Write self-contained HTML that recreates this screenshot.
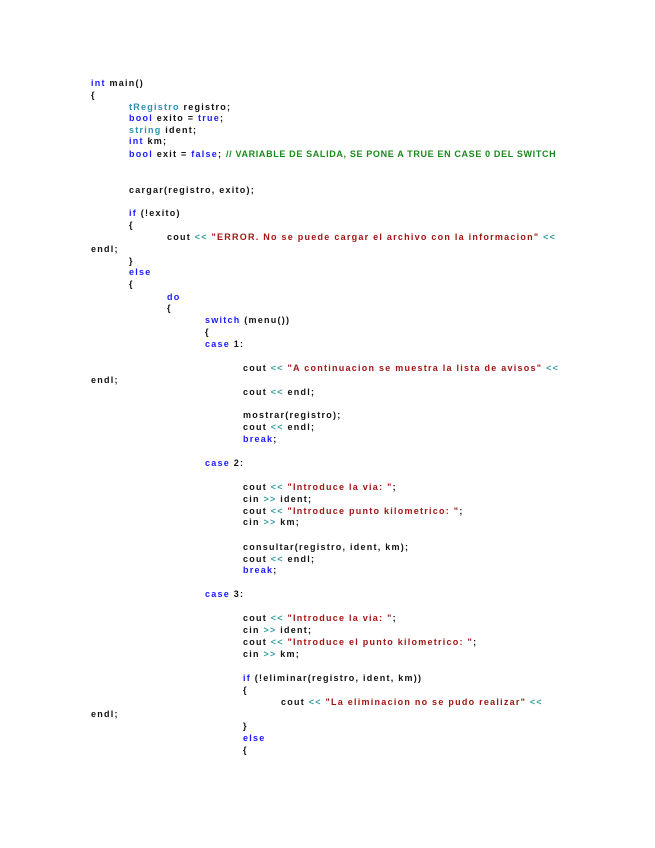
<!DOCTYPE html>
<html><head><meta charset="utf-8"><style>
body{margin:0;width:655px;height:848px;background:#fff;position:relative;overflow:hidden}
.l{position:absolute;white-space:pre;font-family:"Liberation Sans",sans-serif;font-weight:bold;font-size:9px;letter-spacing:1.25px;color:#111;line-height:12px}
.k{color:#1a1aff}.t{color:#2b91af}.s{color:#a31515}.c{color:#1a8a1a;letter-spacing:0.65px}.o{color:#3aa0a0}
</style></head><body>
<div class="l" style="top:77px;left:91px"><span class="k">int</span> main()</div>
<div class="l" style="top:89px;left:91px">{</div>
<div class="l" style="top:101px;left:129px"><span class="t">tRegistro</span> registro;</div>
<div class="l" style="top:112px;left:129px"><span class="k">bool</span> exito = <span class="k">true</span>;</div>
<div class="l" style="top:124px;left:129px"><span class="t">string</span> ident;</div>
<div class="l" style="top:135px;left:129px"><span class="k">int</span> km;</div>
<div class="l" style="top:148px;left:129px"><span class="k">bool</span> exit = <span class="k">false</span>; <span class="c">// VARIABLE DE SALIDA, SE PONE A TRUE EN CASE 0 DEL SWITCH</span></div>
<div class="l" style="top:184px;left:129px">cargar(registro, exito);</div>
<div class="l" style="top:207px;left:129px"><span class="k">if</span> (!exito)</div>
<div class="l" style="top:219px;left:129px">{</div>
<div class="l" style="top:231px;left:167px">cout <span class="o">&lt;&lt;</span> <span class="s">"ERROR. No se puede cargar el archivo con la informacion"</span> <span class="o">&lt;&lt;</span></div>
<div class="l" style="top:243px;left:91px">endl;</div>
<div class="l" style="top:255px;left:129px">}</div>
<div class="l" style="top:266px;left:129px"><span class="k">else</span></div>
<div class="l" style="top:278px;left:129px">{</div>
<div class="l" style="top:291px;left:167px"><span class="k">do</span></div>
<div class="l" style="top:302px;left:167px">{</div>
<div class="l" style="top:314px;left:205px"><span class="k">switch</span> (menu())</div>
<div class="l" style="top:326px;left:205px">{</div>
<div class="l" style="top:338px;left:205px"><span class="k">case</span> 1:</div>
<div class="l" style="top:362px;left:243px">cout <span class="o">&lt;&lt;</span> <span class="s">"A continuacion se muestra la lista de avisos"</span> <span class="o">&lt;&lt;</span></div>
<div class="l" style="top:374px;left:91px">endl;</div>
<div class="l" style="top:386px;left:243px">cout <span class="o">&lt;&lt;</span> endl;</div>
<div class="l" style="top:409px;left:243px">mostrar(registro);</div>
<div class="l" style="top:421px;left:243px">cout <span class="o">&lt;&lt;</span> endl;</div>
<div class="l" style="top:433px;left:243px"><span class="k">break</span>;</div>
<div class="l" style="top:457px;left:205px"><span class="k">case</span> 2:</div>
<div class="l" style="top:481px;left:243px">cout <span class="o">&lt;&lt;</span> <span class="s">"Introduce la via: "</span>;</div>
<div class="l" style="top:493px;left:243px">cin <span class="o">&gt;&gt;</span> ident;</div>
<div class="l" style="top:505px;left:243px">cout <span class="o">&lt;&lt;</span> <span class="s">"Introduce punto kilometrico: "</span>;</div>
<div class="l" style="top:516px;left:243px">cin <span class="o">&gt;&gt;</span> km;</div>
<div class="l" style="top:541px;left:243px">consultar(registro, ident, km);</div>
<div class="l" style="top:553px;left:243px">cout <span class="o">&lt;&lt;</span> endl;</div>
<div class="l" style="top:564px;left:243px"><span class="k">break</span>;</div>
<div class="l" style="top:588px;left:205px"><span class="k">case</span> 3:</div>
<div class="l" style="top:612px;left:243px">cout <span class="o">&lt;&lt;</span> <span class="s">"Introduce la via: "</span>;</div>
<div class="l" style="top:624px;left:243px">cin <span class="o">&gt;&gt;</span> ident;</div>
<div class="l" style="top:636px;left:243px">cout <span class="o">&lt;&lt;</span> <span class="s">"Introduce el punto kilometrico: "</span>;</div>
<div class="l" style="top:648px;left:243px">cin <span class="o">&gt;&gt;</span> km;</div>
<div class="l" style="top:672px;left:243px"><span class="k">if</span> (!eliminar(registro, ident, km))</div>
<div class="l" style="top:684px;left:243px">{</div>
<div class="l" style="top:696px;left:281px">cout <span class="o">&lt;&lt;</span> <span class="s">"La eliminacion no se pudo realizar"</span> <span class="o">&lt;&lt;</span></div>
<div class="l" style="top:708px;left:91px">endl;</div>
<div class="l" style="top:720px;left:243px">}</div>
<div class="l" style="top:732px;left:243px"><span class="k">else</span></div>
<div class="l" style="top:744px;left:243px">{</div>
</body></html>
